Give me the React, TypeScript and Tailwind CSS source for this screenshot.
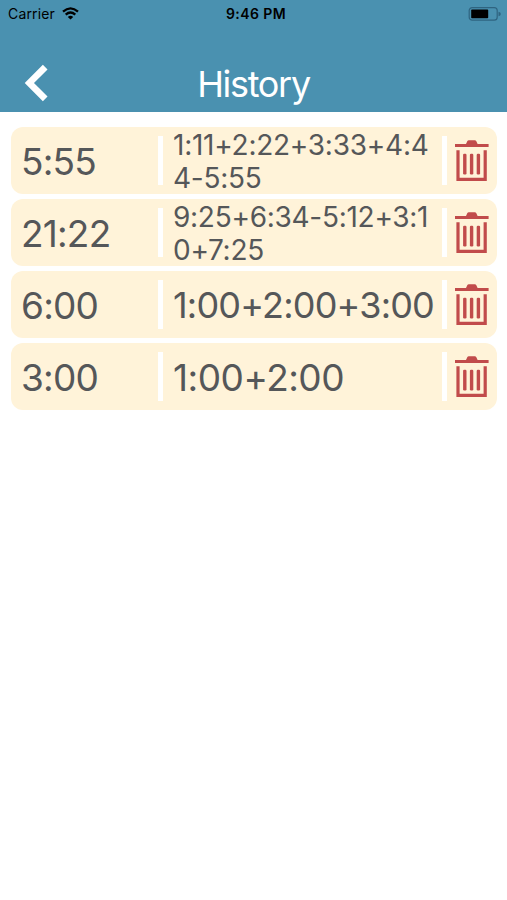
const entries = [
  { result: "5:55", lines: ["1:11+2:22+3:33+4:4", "4-5:55"], size: "pt-[2px] text-[28px] tracking-[-0.25px]" },
  { result: "21:22", lines: ["9:25+6:34-5:12+3:1", "0+7:25"], size: "pt-[2px] text-[28px] tracking-[-0.28px]" },
  { result: "6:00", lines: ["1:00+2:00+3:00"], size: "pt-[2px] text-[36px] tracking-[-0.8px]" },
  { result: "3:00", lines: ["1:00+2:00"], size: "pt-px text-[37px] tracking-[-0.5px]" },
];

function TrashIcon() {
  return (
    <svg width="34" height="42" viewBox="0 0 34 42" fill="#c14b4b">
      <path d="M0 3.9H11L12.4 1.1Q12.8 0.3 13.8 0.3H19.8Q20.8 0.3 21.2 1.1L22.6 3.9H33.6V7.1H0Z" />
      <path d="M1.4 10.2H4.6V37.8H28.6V10.2H31.8V41H1.4Z" />
      <rect x="8.1" y="13.7" width="3.4" height="20.8" rx="1.2" />
      <rect x="14.9" y="13.7" width="3.4" height="20.8" rx="1.2" />
      <rect x="21.7" y="13.7" width="3.4" height="20.8" rx="1.2" />
    </svg>
  );
}

function StatusBar() {
  return (
    <div className="flex h-[27px] items-center justify-between pl-2 pr-[6px] text-black">
      <div className="flex flex-1 items-center gap-[7px] text-[14px] tracking-[0.15px]">
        <span>Carrier</span>
        <svg width="17" height="13" viewBox="0 0 17 13" fill="none" stroke="#000" strokeWidth="2.3">
          <path d="M1 4.6Q8.5 -1.9 16 4.6" />
          <path d="M3.7 7.6Q8.5 3.5 13.3 7.6" />
          <path d="M8.5 12.5L5.8 9.9Q8.5 7.8 11.2 9.9Z" fill="#000" stroke="none" />
        </svg>
      </div>
      <span className="pl-[3px] text-[14px] font-semibold tracking-[0.4px]">9:46 PM</span>
      <div className="flex flex-1 justify-end">
        <svg width="33" height="14" viewBox="0 0 33 14">
          <rect x="1.2" y="0.6" width="28" height="12.6" rx="3" fill="none" stroke="#2f6480" strokeWidth="1.2" />
          <rect x="3.2" y="2.6" width="17" height="8.6" rx="0.8" fill="#000" />
          <path d="M30.5 4.8Q32.8 5.3 32.8 7Q32.8 8.7 30.5 9.2Z" fill="#2f6480" />
        </svg>
      </div>
    </div>
  );
}

export default function App() {
  return (
    <div className="min-h-[900px] w-[507px] bg-white font-['Inter',sans-serif] text-[#555759]">
      <header className="h-[111.5px] bg-[#4a91b0]">
        <StatusBar />
        <div className="grid h-[84px] grid-cols-[1fr_auto_1fr] items-center">
          <button className="ml-[24px] mt-[27px] w-6" aria-label="Back">
            <svg width="24" height="38" viewBox="0 0 24 38" fill="none" stroke="#fff" strokeWidth="6.6">
              <path d="M21.2 3.2L5.4 19L21.2 34.8" />
            </svg>
          </button>
          <h1 className="mt-[29px] text-[36px] leading-[44px] tracking-[-1.3px] text-white">History</h1>
        </div>
      </header>
      <ul className="flex flex-col gap-[5px] pl-[11px] pr-[10px] pt-[15.5px]">
        {entries.map((entry) => (
          <li key={entry.result} className="flex h-[67px] items-center rounded-[12px] bg-[#fff3d9]">
            <span className="w-[147px] pl-[10px] pt-[2px] text-[37px] leading-[44px] tracking-[-0.8px]">{entry.result}</span>
            <span className="h-[49px] w-[5px] shrink-0 bg-white" />
            <div className={`${entry.size} w-[279px] shrink-0 whitespace-nowrap pl-[10px] leading-[33px]`}>
              {entry.lines.map((line) => (
                <div key={line}>{line}</div>
              ))}
            </div>
            <span className="h-[49px] w-[5px] shrink-0 bg-white" />
            <button className="ml-[8px] shrink-0" aria-label="Delete">
              <TrashIcon />
            </button>
          </li>
        ))}
      </ul>
    </div>
  );
}
